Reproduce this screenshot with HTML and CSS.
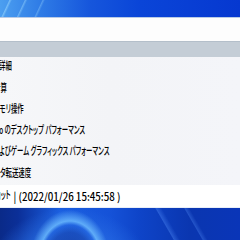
FILE: index.html
```html
<!DOCTYPE html>
<html lang="ja">
<head>
    <meta charset="UTF-8">
    <title>評価の詳細</title>
    <link rel="stylesheet" href="styles.css">
</head>
<body>
    <div class="wall wall-top"></div>
    <div class="dialog">
        <div class="blank"></div>
        <div class="header"></div>
        <div class="list">
            <div class="row"><span class="txt cut-1">詳細</span></div>
            <div class="row"><span class="txt cut-2">計算</span></div>
            <div class="row"><span class="txt cut-3">メモリ操作</span></div>
            <div class="row"><span class="txt cut-4">Aero のデスクトップ パフォーマンス</span></div>
            <div class="row"><span class="txt cut-5">およびゲーム グラフィックス パフォーマンス</span></div>
            <div class="row"><span class="txt cut-6">タ転送速度</span></div>
        </div>
        <div class="footer"><span class="txt cut-7">ショット</span><span class="date">| (2022/01/26 15:45:58 )</span></div>
    </div>
    <div class="wall wall-bottom"></div>
</body>
</html>
```

FILE: styles.css
```css
html, body {
    margin: 0;
    width: 240px;
    height: 240px;
    overflow: hidden;
}
body {
    font-family: "Noto Sans CJK JP", "Noto Sans", sans-serif;
    font-feature-settings: "palt";
    color: #000;
    background: #0a3bc4;
}
.wall-top {
    height: 18px;
    background:
        linear-gradient(115deg, transparent 0, transparent 8px, rgba(160, 220, 255, 0.55) 9px, transparent 11px,
            transparent 22px, rgba(160, 220, 255, 0.45) 23px, transparent 25px,
            transparent 38px, rgba(160, 220, 255, 0.35) 39px, transparent 41px),
        linear-gradient(90deg, #4c9ff0 0, #2f7ce6 40px, #1656dc 90px, #0a45d8 140px, #0638d0 240px);
    border-bottom: 1px solid #b9cbe6;
    box-sizing: border-box;
}
.dialog {
    background: #fff;
}
.blank {
    height: 23px;
    background: #fdfdfd;
}
.header {
    height: 16px;
    background: #c4cdd6;
    border-top: 1px solid #b4bfca;
    box-sizing: border-box;
}
.list {
    background: linear-gradient(90deg, #f6f7f9 0, #f3f4f7 110px, #f4f5f9 240px);
}
.row {
    height: 21.3px;
    line-height: 19px;
    font-size: 6.4px;
    white-space: nowrap;
    overflow: hidden;
}
.footer {
    height: 23px;
    line-height: 22px;
    font-size: 6.4px;
    background: #fff;
    border-bottom: 1px solid #e8eef8;
    box-sizing: border-box;
    white-space: nowrap;
    overflow: hidden;
}
/* narrow UI font: small size, stretched back up to full height */
.txt {
    display: inline-block;
    vertical-align: middle;
    line-height: 10px;
    font-size: 6.4px;
    font-weight: 500;
    transform: scaleY(1.7);
}
.date {
    display: inline-block;
    vertical-align: middle;
    padding-left: 3px;
    line-height: 12px;
    font-size: 9.7px;
    font-weight: 500;
    transform: scaleY(1.14);
}
.cut-1 { margin-left: -1px; }
.cut-2 { margin-left: -6px; }
.cut-3 { margin-left: -6px; }
.cut-4 { margin-left: -11px; }
.cut-5 { margin-left: -7px; }
.cut-6 { margin-left: 0; }
.cut-7 { margin-left: -10px; }
.wall-bottom {
    height: 32px;
    background:
        linear-gradient(60deg, transparent 0, transparent 150px, rgba(90, 150, 255, 0.35) 151px, transparent 156px,
            transparent 175px, rgba(90, 150, 255, 0.3) 176px, transparent 180px),
        radial-gradient(ellipse 40px 50px at 70px 52px, rgba(10, 40, 140, 0.7) 0, rgba(10, 40, 140, 0.4) 55%, rgba(10, 40, 140, 0) 70%, rgba(110, 190, 255, 0.8) 78%, rgba(60, 140, 240, 0) 100%),
        radial-gradient(ellipse 80px 60px at 70px 60px, #3d8ff2 0, #2a6fe4 40%, rgba(16, 70, 200, 0) 100%),
        linear-gradient(90deg, #0a2a88 0, #0b2f98 18px, #1a5ee0 60px, #1552d8 110px, #0e44c8 140px, #0a36b0 190px, #0a35b8 240px);
}
```
